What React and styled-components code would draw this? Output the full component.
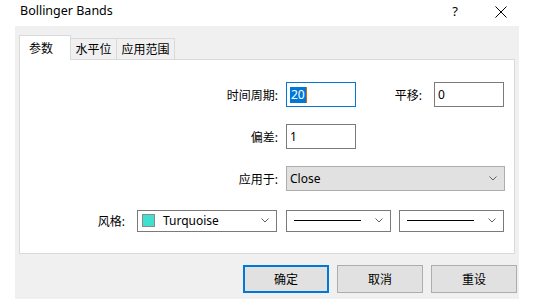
import styled, { createGlobalStyle } from 'styled-components';

const GlobalStyle = createGlobalStyle`
  html, body {
    margin: 0;
    padding: 0;
    background: #ffffff;
  }
  body {
    font-family: 'Noto Sans', 'Noto Sans CJK SC', sans-serif;
    font-size: 12px;
    color: #000000;
  }
`;

const Window = styled.div`
  width: 533px;
  height: 299px;
  display: flex;
  flex-direction: column;
  background: #ffffff;
  overflow: hidden;
`;

const TitleBar = styled.div`
  height: 26px;
  flex: none;
  display: flex;
  align-items: center;
  padding: 0 20px 0 20px;
`;

const Title = styled.div`
  flex: 1;
  font-size: 12.5px;
  line-height: 1;
  margin-top: -3px;
`;

const HelpMark = styled.span`
  font-size: 13px;
  line-height: 1;
  margin-top: -3px;
  margin-right: 37px;
  color: #000;
`;

const CloseMark = styled.svg`
  width: 12px;
  height: 12px;
  margin-top: -3px;
  margin-right: 6px;
`;

const Client = styled.div`
  flex: 1;
  margin: 0 14px 0 15px;
  padding: 9px 2px 0 4px;
  background: #f0f0f0;
  display: flex;
  flex-direction: column;
`;

const TabStrip = styled.div`
  height: 24px;
  display: flex;
  align-items: flex-end;
`;

const Tab = styled.div`
  box-sizing: border-box;
  width: ${(p) => p.$width}px;
  height: ${(p) => (p.$active ? 25 : 21)}px;
  margin-bottom: ${(p) => (p.$active ? -1 : 0)}px;
  position: relative;
  z-index: ${(p) => (p.$active ? 1 : 0)};
  display: flex;
  align-items: center;
  justify-content: center;
  border: 1px solid #d9d9d9;
  border-bottom: none;
  border-left: ${(p) => (p.$active ? '1px solid #d9d9d9' : 'none')};
  background: ${(p) => (p.$active ? '#ffffff' : '#f0f0f0')};
  font-size: 12px;
  padding-right: ${(p) => (p.$active ? 8 : 0)}px;
`;

const Panel = styled.div`
  box-sizing: border-box;
  width: 496px;
  height: 195px;
  background: #ffffff;
  border: 1px solid #d9d9d9;
  padding: 22px 9px 0 0;
  display: flex;
  flex-direction: column;
  gap: 17px;
`;

const Row = styled.div`
  height: 25px;
  display: grid;
  grid-template-columns: 1fr 219px;
  column-gap: 5px;
  align-items: center;
`;

const Label = styled.div`
  text-align: right;
  padding-right: 3px;
  white-space: nowrap;
`;

const LabelCell = styled.div`
  display: flex;
  align-items: center;
  justify-content: flex-end;
  gap: 9px;
  padding-right: 4px;
`;

const Controls = styled.div`
  display: flex;
  align-items: center;
  justify-content: ${(p) => p.$justify || 'flex-start'};
  gap: 8px;
`;

const Group = styled.div`
  display: flex;
  align-items: center;
  gap: 9px;
  margin-right: 1px;
`;

const TextBox = styled.div`
  box-sizing: border-box;
  width: 70px;
  height: 25px;
  border: 1px solid ${(p) => (p.$focused ? '#0078d7' : '#7a7a7a')};
  background: #ffffff;
  display: flex;
  align-items: center;
  padding-left: 3px;
  font-size: 12px;
`;

const Selected = styled.span`
  background: #0078d7;
  color: #ffffff;
  line-height: 16px;
  padding: 0 1px;
`;

const Caret = styled.span`
  width: 1px;
  height: 16px;
  background: #d46b08;
`;

const Combo = styled.div`
  box-sizing: border-box;
  width: ${(p) => p.$width}px;
  height: ${(p) => p.$height || 22}px;
  border: 1px solid ${(p) => (p.$flat ? '#adadad' : '#7a7a7a')};
  background: ${(p) => (p.$flat ? '#e1e1e1' : '#ffffff')};
  display: flex;
  align-items: center;
  padding: 0 7px 0 3px;
  gap: 8px;
`;

const ComboText = styled.span`
  flex: 1;
  line-height: 16px;
  white-space: nowrap;
`;

const Swatch = styled.span`
  box-sizing: border-box;
  width: 13px;
  height: 13px;
  margin-left: 1px;
  background: #40e0d0;
  border: 1px solid #8a8a8a;
  flex: none;
`;

const LineSample = styled.span`
  flex: 1;
  height: 1px;
  margin: 0 6px 0 4px;
  background: #000000;
`;

const Chevron = styled.svg`
  width: 8px;
  height: 5px;
  flex: none;
`;

const ButtonRow = styled.div`
  margin-top: 11px;
  display: flex;
  justify-content: flex-end;
  gap: 8px;
`;

const Button = styled.button`
  box-sizing: border-box;
  width: 86px;
  height: 28px;
  background: #e1e1e1;
  border: ${(p) => (p.$default ? '2px solid #0078d7' : '1px solid #adadad')};
  font-family: 'Noto Sans', 'Noto Sans CJK SC', sans-serif;
  font-size: 12px;
  color: #000000;
  padding: 0;
`;

function Arrow() {
  return (
    <Chevron viewBox="0 0 8 5">
      <path d="M0.5 0.5 L4 4 L7.5 0.5" fill="none" stroke="#606060" strokeWidth="1" />
    </Chevron>
  );
}

function LineCombo() {
  return (
    <Combo $width={105}>
      <LineSample />
      <Arrow />
    </Combo>
  );
}

export default function App() {
  return (
    <>
      <GlobalStyle />
      <Window>
        <TitleBar>
          <Title>Bollinger Bands</Title>
          <HelpMark>?</HelpMark>
          <CloseMark viewBox="0 0 12 12">
            <path d="M0.5 0.5 L11.5 11.5 M11.5 0.5 L0.5 11.5" stroke="#000" strokeWidth="1" />
          </CloseMark>
        </TitleBar>

        <Client>
          <TabStrip>
            <Tab $active $width={52}>参数</Tab>
            <Tab $width={46}>水平位</Tab>
            <Tab $width={58}>应用范围</Tab>
          </TabStrip>

          <Panel>
            <Row>
              <Label>时间周期:</Label>
              <Controls $justify="space-between">
                <TextBox $focused>
                  <Selected>20</Selected>
                  <Caret />
                </TextBox>
                <Group>
                  <Label>平移:</Label>
                  <TextBox>0</TextBox>
                </Group>
              </Controls>
            </Row>

            <Row>
              <Label>偏差:</Label>
              <Controls>
                <TextBox>1</TextBox>
              </Controls>
            </Row>

            <Row>
              <Label>应用于:</Label>
              <Controls>
                <Combo $flat $width={219} $height={25}>
                  <ComboText>Close</ComboText>
                  <Arrow />
                </Combo>
              </Controls>
            </Row>

            <Row>
              <LabelCell>
                <Label>风格:</Label>
                <Combo $width={140}>
                  <Swatch />
                  <ComboText>Turquoise</ComboText>
                  <Arrow />
                </Combo>
              </LabelCell>
              <Controls>
                <LineCombo />
                <LineCombo />
              </Controls>
            </Row>
          </Panel>

          <ButtonRow>
            <Button $default>确定</Button>
            <Button>取消</Button>
            <Button>重设</Button>
          </ButtonRow>
        </Client>
      </Window>
    </>
  );
}
